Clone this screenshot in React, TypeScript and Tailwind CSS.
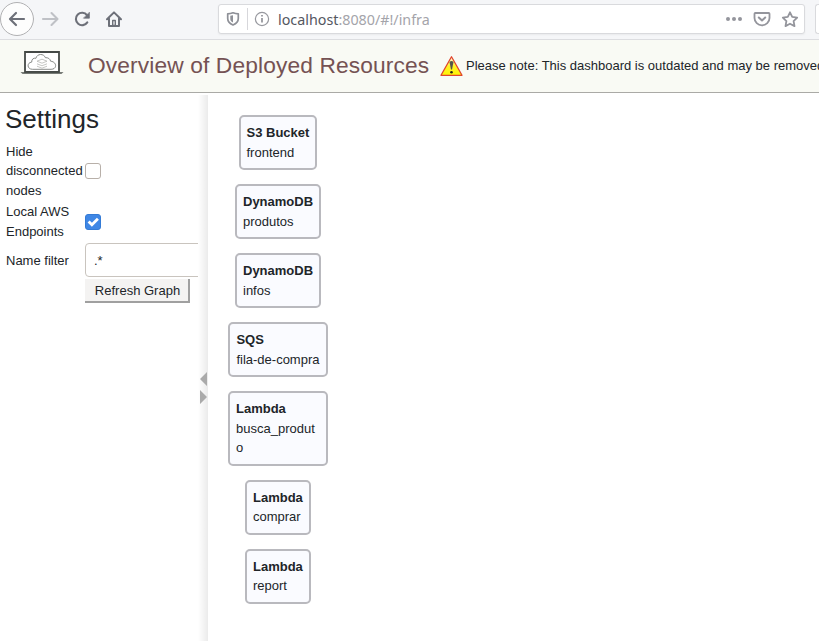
import React from "react";

type ResourceNode = { kind: string; name: string; box: string };

const resources: ResourceNode[] = [
  { kind: "S3 Bucket", name: "frontend", box: "w-[78px] h-[55px] pl-[5.5px] leading-[19.5px]" },
  { kind: "DynamoDB", name: "produtos", box: "w-[86px] h-[55px] pl-[6px] leading-[19.5px]" },
  { kind: "DynamoDB", name: "infos", box: "w-[86px] h-[55px] pl-[6px] leading-[19.5px]" },
  { kind: "SQS", name: "fila-de-compra", box: "w-[100px] h-[55px] pl-[6.4px] leading-[19.5px]" },
  { kind: "Lambda", name: "busca_produto", box: "w-[100px] h-[75px] pl-[6px] leading-[19.5px]" },
  { kind: "Lambda", name: "comprar", box: "w-[66px] h-[55px] pl-[6px] leading-[19px]" },
  { kind: "Lambda", name: "report", box: "w-[66px] h-[55px] pl-[6px] leading-[19px]" },
];

function BrowserBar() {
  return (
    <div className="flex h-10 shrink-0 items-start border-b border-[#dcdde0] bg-[#f5f6f8]">
      <div className="flex h-[38px] w-[218px] shrink-0 items-center">
        <svg width="126" height="38" viewBox="0 0 126 38" fill="none" strokeLinecap="round" strokeLinejoin="round">
          <circle cx="17" cy="19" r="16.5" fill="#fdfdfd" stroke="#b1b1b3" />
          <path d="M24 19H10.5M16 13l-6 6 6 6" stroke="#6d7079" strokeWidth="2.2" />
          <path d="M43 19h14M51.5 13l6 6-6 6" stroke="#bfc1c6" strokeWidth="2.1" />
          <path d="M87 15.2A6.2 6.2 0 1 0 87.3 22.4" stroke="#6d7079" strokeWidth="2.1" />
          <path d="M89.4 12.6v5.6h-5.6z" fill="#6d7079" stroke="#6d7079" strokeWidth="0.7" />
          <path d="M107 19.2l7-6.8 7 6.8M109 18.5v7.5h10v-7.5" stroke="#6d7079" strokeWidth="2" />
          <path d="M112.7 25.5v-5h2.6v5z" stroke="#6d7079" strokeWidth="1.4" />
        </svg>
      </div>
      <div className="mt-1 flex h-[30px] w-[587px] shrink-0 items-center rounded-[3px] border border-[#d9dadd] bg-white shadow-[0_1px_2px_rgba(0,0,0,0.05)]">
        <svg className="shrink-0" width="56" height="28" viewBox="219 5 56 28" fill="none">
          <path d="M227.7 13.8q2.7 0 5.3-1 2.6 1 5.3 1v4.7c0 3-1.7 5-5.3 6.5-3.6-1.5-5.3-3.5-5.3-6.5z" stroke="#8e9097" strokeWidth="1.7" strokeLinejoin="round" />
          <path d="M233 15.2v7.3c-2-1-2.7-2-2.7-4.1v-2.7c1 0 1.8-.2 2.7-.5z" fill="#8e9097" />
          <path d="M247.5 8v22" stroke="#d7d7db" />
          <circle cx="262" cy="19" r="6.6" stroke="#97989e" strokeWidth="1.2" />
          <path d="M262 18v4.4M262 15v1.6" stroke="#97989e" strokeWidth="1.8" />
        </svg>
        <div className="ml-[3px] grow whitespace-nowrap pt-px text-[14.3px] leading-5 text-[#a4a4aa] [font-family:'Noto_Sans',sans-serif]">
          <span className="text-[#55575f]">localhost</span>:8080/#!/infra
        </div>
        <svg className="shrink-0" width="84" height="28" viewBox="720 5 84 28" fill="none" strokeLinejoin="round" strokeLinecap="round">
          <g fill="#94959c">
            <circle cx="728" cy="19" r="2" />
            <circle cx="734" cy="19" r="2" />
            <circle cx="740" cy="19" r="2" />
          </g>
          <path d="M755.3 13h13.4q.8 0 .8.8v4.2a7.5 7.3 0 0 1-15 0v-4.2q0-.8.8-.8z" stroke="#94959c" strokeWidth="1.8" />
          <path d="M758.8 17.5l3.2 3 3.2-3" stroke="#94959c" strokeWidth="2" />
          <path d="M790 12.3l2.2 4.6 5 .7-3.6 3.5.9 5-4.5-2.4-4.5 2.4.9-5-3.6-3.5 5-.7z" stroke="#94959c" strokeWidth="1.8" />
        </svg>
      </div>
      <div className="ml-[10px] mt-1 h-[30px] grow rounded-l-[3px] border border-r-0 border-[#d9dadd] bg-white" />
    </div>
  );
}

function Header() {
  return (
    <header className="flex h-[53px] shrink-0 items-center overflow-hidden whitespace-nowrap border-b border-[#aaaaa6] bg-[#f9faf4]">
      <svg className="ml-5 mb-[6px] shrink-0" width="44" height="26" viewBox="20 50 44 26" fill="none">
        <path d="M25 52h34v20H25z" fill="#fff" stroke="#454946" strokeWidth="1.8" />
        <path d="M20.5 72.3h43l-2 1.5h-39z" fill="#4b504c" />
        <path d="M32.5 69.3c-5.5 0-6-6.6-.8-7.2-.2-3 2-4.4 4.2-3.8 1.1-4.9 8-5 9.5-.6 2.7-.3 4.8 1.2 5.2 3.5 6.5.6 6.7 8.1.5 8.1z" stroke="#7b7e7b" strokeWidth="0.9" />
        <path d="M37 61.2l5-2 5 2-5 2zM37 63.8l5 2 5-2M37 66.2l5 2 5-2" stroke="#b6b8b4" strokeWidth="0.8" />
      </svg>
      <h1 className="mb-[2px] ml-6 w-[352px] shrink-0 text-[22.75px] leading-7 tracking-[0.12px] text-[#755253]">Overview of Deployed Resources</h1>
      <svg className="shrink-0" width="24" height="22" viewBox="440 55 24 22">
        <defs>
          <linearGradient id="warning-fill" x1="0" y1="0" x2="0" y2="1">
            <stop offset="0.1" stopColor="#fffbd0" />
            <stop offset="0.5" stopColor="#fff229" />
            <stop offset="1" stopColor="#fff500" />
          </linearGradient>
        </defs>
        <path d="M451.5 56.8l10.5 18.5h-21z" fill="url(#warning-fill)" stroke="#e0452d" strokeWidth="1.3" strokeLinejoin="round" />
        <path d="M449.5 62q2-1.8 4 0l-1.5 7.5h-1z" fill="#55554a" />
        <circle cx="451.5" cy="72.3" r="1.3" fill="#282817" />
      </svg>
      <span className="ml-[2px] text-[13px] leading-5 text-[#212529]">Please note: This dashboard is outdated and may be removed</span>
    </header>
  );
}

function Settings() {
  return (
    <aside className="mt-[2px] flex w-[208px] shrink-0 bg-white">
      <div className="w-[198px] shrink-0 overflow-hidden">
        <h2 className="ml-[5px] mt-[9px] h-[37.5px] text-[26px] leading-[31px]">Settings</h2>
        <div className="flex h-[59px] items-center">
          <label htmlFor="hide-nodes" className="ml-[6px] w-[79px] shrink-0 leading-[19.5px]">Hide disconnected nodes</label>
          <input id="hide-nodes" type="checkbox" className="size-4 appearance-none rounded-[3px] border border-[#b8b0a9] bg-white" />
        </div>
        <div className="mt-[1.5px] flex h-[39px] items-center">
          <label className="ml-[6px] w-[79px] shrink-0 leading-[19.5px]">Local AWS Endpoints</label>
          <span role="checkbox" aria-checked="true" className="mt-px flex size-4 items-center justify-center rounded-[3px] border border-[#347bd6] bg-[#3f87e5]">
            <svg width="14" height="14" viewBox="0 0 14 14" className="shrink-0">
              <path d="M2.6 6.5l3.3 3.3 6-6" fill="none" stroke="white" strokeWidth="2.8" />
            </svg>
          </span>
        </div>
        <div className="mt-px flex h-[35px] items-center">
          <label htmlFor="name-filter" className="ml-[6px] w-[79px] shrink-0 pt-[2px] leading-[19.5px]">Name filter</label>
          <input id="name-filter" defaultValue=".*" className="h-[34px] w-[160px] shrink-0 rounded-[4px] border border-[#c9c4be] bg-white px-2 pt-px text-[13px] outline-none" />
        </div>
        <button className="ml-[85px] mt-[2px] block h-6 w-[105px] border-b-2 border-r-2 border-[#a0a0a0] bg-[#f4f3f2] pl-[2px] text-[13px] leading-[23px]">Refresh Graph</button>
      </div>
      <div className="flex grow flex-col items-end bg-linear-to-r from-white to-[#ebebeb] pt-[277px]">
        <svg width="9" height="32" viewBox="199 372 9 32" fill="#aaa">
          <path d="M207 372v14l-7-7zM200 390v14l7-7z" />
        </svg>
      </div>
    </aside>
  );
}

function Graph() {
  return (
    <main className="flex w-[140px] flex-col items-center gap-[14px] pt-[22px]">
      {resources.map((resource) => (
        <section key={resource.kind + resource.name} className={"shrink-0 rounded-[5px] border-2 border-[#b9b9be] bg-[#fafbff] py-[6px] pr-[5px] " + resource.box}>
          <div className="whitespace-nowrap font-bold">{resource.kind}</div>
          <div className="break-all">{resource.name}</div>
        </section>
      ))}
    </main>
  );
}

export default function App() {
  return (
    <div className="flex h-[641px] w-[819px] flex-col overflow-hidden bg-white text-[13px] text-[#212529] [font-family:'Liberation_Sans',Arial,sans-serif]">
      <BrowserBar />
      <Header />
      <div className="flex min-h-0 grow">
        <Settings />
        <Graph />
      </div>
    </div>
  );
}
